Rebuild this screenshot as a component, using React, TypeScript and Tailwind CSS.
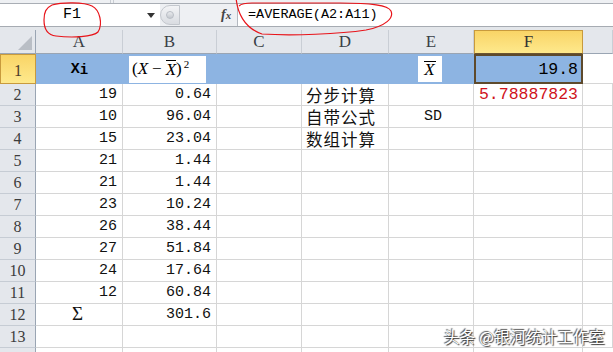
import React from "react";

const mono = { fontFamily: '"Liberation Mono", "Noto Sans CJK SC", monospace' };
const serif = { fontFamily: '"Liberation Serif", "Noto Sans CJK SC", serif' };
const cjk = { fontFamily: '"Noto Sans CJK SC", "Liberation Sans", sans-serif' };

const colLetters = ["A", "B", "C", "D", "E", "F", ""];

type Row = string[];
const rows: Row[] = [
  ["19", "0.64", "", "分步计算", "", "5.78887823"],
  ["10", "96.04", "", "自带公式", "SD", ""],
  ["15", "23.04", "", "数组计算", "", ""],
  ["21", "1.44", "", "", "", ""],
  ["21", "1.44", "", "", "", ""],
  ["23", "10.24", "", "", "", ""],
  ["26", "38.44", "", "", "", ""],
  ["27", "51.84", "", "", "", ""],
  ["24", "17.64", "", "", "", ""],
  ["12", "60.84", "", "", "", ""],
  ["Σ", "301.6", "", "", "", ""],
  ["", "", "", "", "", ""],
];

function RowHeader({ n, h }: { n: string; h: string }) {
  return (
    <div
      className={`${h} flex items-end justify-center border-r border-b border-r-[#9aa5b3] border-b-[#c6ccd4] bg-[#e4e7ec] text-[16px] leading-[20px] text-[#3c3c3c]`}
      style={serif}
    >
      {n}
    </div>
  );
}

function DataRow({ r, idx }: { r: Row; idx: number }) {
  const cell = "h-[22px] border-r border-b border-[#d6d6d6] flex items-end text-[15px] text-[#111]";
  return (
    <>
      <RowHeader n={String(idx + 2)} h="h-[22px]" />
      <div
        className={`${cell} pb-[1px] leading-[19px] ${r[0] === "Σ" ? "justify-center" : "justify-end pr-[5px]"}`}
        style={r[0] === "Σ" ? serif : mono}
      >
        {r[0] === "Σ" ? <span className="text-[19px] leading-[20px] pr-[3px]">Σ</span> : r[0]}
      </div>
      <div className={`${cell} pb-[1px] leading-[19px] justify-end pr-[5px]`} style={mono}>{r[1]}</div>
      <div className={cell}></div>
      <div className={`${cell} justify-start pl-[4px] text-[16.5px] leading-[20px] tracking-[1px]`} style={cjk}>
        {r[3]}
      </div>
      <div className={`${cell} pb-[1px] leading-[19px] justify-center pl-[4px]`} style={mono}>{r[4]}</div>
      <div className={`${cell} pb-[1px] leading-[19px] justify-end pr-[4px] text-[#d0121b] text-[16.5px]`} style={mono}>
        {r[5]}
      </div>
      <div className={cell}></div>
    </>
  );
}

export default function App() {
  return (
    <div className="relative w-[613px] h-[352px] overflow-hidden bg-white">
      {/* top strip */}
      <div className="h-[4px] bg-[#eef0f3] border-b border-[#a9aeb5] flex">
        <div className="w-[110px]" />
        <div className="w-[1px] bg-[#c8ccd2]" />
        <div className="w-[2px]" />
        <div className="w-[1px] bg-[#c8ccd2]" />
      </div>
      {/* formula bar */}
      <div className="h-[23px] flex bg-white border-b border-[#a6abb2]">
        <div className="w-[160px] flex items-center relative">
          <span className="absolute left-[63px] top-[2px] text-[15px] leading-[18px] text-black" style={mono}>F1</span>
          <svg className="absolute left-[147px] top-[9px]" width="8" height="5" viewBox="0 0 8 5">
            <path d="M0 0 H8 L4 5 Z" fill="#333" />
          </svg>
        </div>
        <div className="w-[77px] flex items-center bg-[#eef0f3] relative">
          <div className="absolute left-[0px] top-[1px] w-[20px] h-[20px] rounded-l-full bg-gradient-to-b from-[#f3f4f6] to-[#d9dce1] border border-[#c3c7cd] flex items-center justify-center">
            <div className="w-[8px] h-[8px] rounded-full bg-gradient-to-b from-[#e9ebee] to-[#c4c8ce] border border-[#b9bec5]" />
          </div>
          <span className="absolute left-[61px] top-[1px] italic font-bold text-[14px] leading-[20px] text-[#444]" style={serif}>
            f<span className="text-[11px]">x</span>
          </span>
        </div>
        <div className="flex-1 border-l border-[#b4b9c0] flex items-center pl-[10px] text-[13.5px] leading-[20px] text-black" style={mono}>
          =AVERAGE(A2:A11)
        </div>
      </div>
      <div className="h-[3px] bg-[#e3e6ea]" />
      {/* grid */}
      <div className="grid grid-cols-[36px_87px_94px_85px_87px_85px_109px_30px]">
        {/* header row */}
        <div className="h-[24px] bg-[#e4e7ec] border-r border-b border-r-[#9aa5b3] border-b-[#9aa5b3] relative">
          <svg className="absolute right-[3px] bottom-[3px]" width="14" height="14" viewBox="0 0 14 14">
            <path d="M14 0 V14 H0 Z" fill="#b9bec5" />
          </svg>
        </div>
        {colLetters.map((c, i) =>
          c === "F" ? (
            <div
              key={i}
              className="h-[24px] bg-gradient-to-b from-[#f9d466] to-[#fee98c] border border-[#c89a3d] border-b-[#6b5530] flex items-center justify-center text-[17px] text-[#333]"
              style={serif}
            >
              F
            </div>
          ) : (
            <div
              key={i}
              className="h-[24px] bg-[#e4e7ec] border-r border-b border-r-[#c9ced5] border-b-[#9aa5b3] flex items-center justify-center text-[17px] text-[#3a3f46]"
              style={serif}
            >
              {c}
            </div>
          )
        )}
        {/* row 1 */}
        <div
          className="h-[30px] bg-gradient-to-b from-[#f9d466] to-[#fee98c] border border-[#c89a3d] flex items-end justify-center pb-[3px] text-[16px] leading-[18px] text-[#4a3a2a]"
          style={serif}
        >
          1
        </div>
        <div className="h-[30px] bg-[#8db4e2] flex items-center justify-center font-bold text-[15px] text-black pt-[3px]" style={mono}>
          X<span className="text-[14px]">i</span>
        </div>
        <div className="h-[30px] bg-[#8db4e2] flex items-center pl-[6px]">
          <div className="w-[77px] h-[27px] bg-white flex items-center pl-[3px] text-[17px] leading-[20px] text-black" style={serif}>
            <span>(</span>
            <i>X</i>
            <span className="px-[4px]">−</span>
            <i className="border-t border-black leading-[17px]">X</i>
            <span>)</span>
            <span className="text-[11px] leading-[11px] self-start mt-[3px] ml-[2px]">2</span>
          </div>
        </div>
        <div className="h-[30px] bg-[#8db4e2]" />
        <div className="h-[30px] bg-[#8db4e2]" />
        <div className="h-[30px] bg-[#8db4e2] flex items-center pl-[29px]">
          <div className="w-[24px] h-[26px] bg-white flex items-center justify-center text-[17px] text-black" style={serif}>
            <i className="border-t border-black leading-[16px] pr-[1px]">X</i>
          </div>
        </div>
        <div
          className="h-[30px] bg-[#8db4e2] shadow-[inset_0_0_0_2px_#5e4a2c] flex items-end justify-end pr-[5px] pb-[5px] text-[16.5px] leading-[19px] text-black"
          style={mono}
        >
          19.8
        </div>
        <div className="h-[30px] border-b border-[#d6d6d6]" />
        {rows.map((r, i) => (
          <DataRow key={i} r={r} idx={i} />
        ))}
        {/* row 14 partial */}
        <div className="h-[4px] bg-[#e4e7ec] border-r border-[#9aa5b3]" />
        <div className="h-[4px] border-r border-[#d6d6d6]" />
        <div className="h-[4px] border-r border-[#d6d6d6]" />
        <div className="h-[4px] border-r border-[#d6d6d6]" />
        <div className="h-[4px] border-r border-[#d6d6d6]" />
        <div className="h-[4px] border-r border-[#d6d6d6]" />
        <div className="h-[4px] border-r border-[#d6d6d6]" />
        <div className="h-[4px]" />
      </div>

      {/* red annotation circles */}
      <svg className="absolute left-0 top-0 pointer-events-none" width="613" height="60" viewBox="0 0 613 60">
        <path
          d="M52 5 C62 2 84 2 92 6 C100 10 103 24 98 32 C93 37 72 38 56 36 C47 35 44 29 44 20 C44 12 46 8 52 5"
          fill="none"
          stroke="#e8141a"
          strokeWidth="1.2"
        />
        <path
          d="M236 -3 C237 12 244 28 262 34 C292 36 340 34 366 30 C386 26 394 18 391 11 C388 5 372 3 340 3 L252 3 C246 3 241 4 239 6"
          fill="none"
          stroke="#e8141a"
          strokeWidth="1.2"
        />
      </svg>

      {/* watermark */}
      <div
        className="absolute left-[444px] top-[326px] text-[15.5px] leading-[20px] text-white tracking-[0.3px] [text-shadow:1px_1px_1px_#333,-1px_-1px_1px_#555]"
        style={cjk}
      >
        头条 @银河统计工作室
      </div>
    </div>
  );
}
